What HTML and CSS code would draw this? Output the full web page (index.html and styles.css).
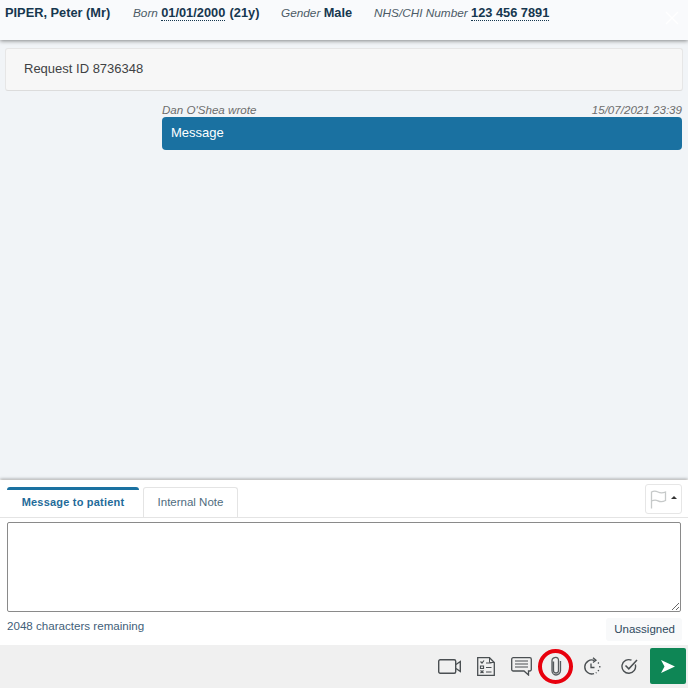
FILE: index.html
```html
<!DOCTYPE html>
<html lang="en">
<head>
<meta charset="utf-8">
<title>Request</title>
<link rel="stylesheet" href="styles.css">
</head>
<body>
<div class="app">
  <header class="patient">
    <span class="name">PIPER, Peter (Mr)</span>
    <span class="field born"><i>Born</i> <b class="dotted">01/01/2000</b> <b>(21y)</b></span>
    <span class="field gender"><i>Gender</i> <b>Male</b></span>
    <span class="field nhs"><i>NHS/CHI Number</i> <b class="dotted">123 456 7891</b></span>
    <svg class="close" width="14" height="14" viewBox="0 0 14 14"><path d="M1 1L13 13M13 1L1 13" stroke="#fff" stroke-width="1.4" fill="none"/></svg>
  </header>
  <main class="thread">
    <div class="request">Request ID 8736348</div>
    <div class="message">
      <div class="meta"><span>Dan O'Shea wrote</span><span>15/07/2021 23:39</span></div>
      <div class="bubble">Message</div>
    </div>
  </main>
  <section class="composer">
    <div class="tabbar">
      <div class="tabs">
        <div class="tab active">Message to patient</div>
        <div class="tab">Internal Note</div>
      </div>
      <div class="flagbtn">
        <svg width="17" height="19" viewBox="0 0 17 19"><path d="M1.5 18.5V2C4 .6 6 1 8 2s4.500 1.200 7.500 0V10.500C12.500 12 10 11.800 8 10.800S4 9.800 1.500 11" fill="none" stroke="#c6c9c9" stroke-width="1.300"/></svg>
        <span class="caret"></span>
      </div>
    </div>
    <div class="inputwrap"><textarea class="input"></textarea></div>
    <div class="statusrow">
      <span class="remaining">2048 characters remaining</span>
      <span class="assign">Unassigned</span>
    </div>
  </section>
  <footer class="toolbar">
    <svg class="tool cam" width="23" height="15" viewBox="0 0 23 15"><rect x=".7" y=".7" width="17" height="13.600" rx="1.500" fill="none" stroke="#4a4f52" stroke-width="1.400"/><path d="M18 5.500L22.300 2.500V12.500L18 9.500" fill="none" stroke="#4a4f52" stroke-width="1.400"/></svg>
    <svg class="tool doc" width="18" height="19" viewBox="0 0 18 19"><path d="M.7.7H12.500L17.300 5.500V18.300H.7Z" fill="none" stroke="#4a4f52" stroke-width="1.300"/><path d="M12.500 .7V5.500H17.300" fill="none" stroke="#4a4f52" stroke-width="1"/><path d="M3.500 4.500L5 6L7 3.500M9 6H14.500M3.500 9H6.500V11.500H3.500ZM9 10.500H14.500M3.500 13.500L6.500 16M6.500 13.500L3.500 16M9 15H14.500" fill="none" stroke="#4a4f52" stroke-width="1.200"/></svg>
    <svg class="tool chat" width="21" height="19" viewBox="0 0 21 19"><path d="M2.200 .7H18.800A1.500 1.500 0 0 1 20.300 2.200V12.500A1.500 1.500 0 0 1 18.800 14H17.500V18L13 14H2.200A1.500 1.500 0 0 1 .7 12.500V2.200A1.500 1.500 0 0 1 2.200 .7Z" fill="none" stroke="#4a4f52" stroke-width="1.300"/><path d="M4 4H17M4 7H17M4 10H17" stroke="#4a4f52" stroke-width="1.200"/></svg>
    <div class="attach">
      <svg width="12" height="20" viewBox="0 0 12 20"><path d="M3.500 5.500V14.500C3.500 16 4.500 17 6 17S8.500 16 8.500 14.500V4.500C8.500 2.500 7.300 1.300 5.800 1.300S2 2.500 2 4.500V14.500C2 17 3.700 19 6 19S10.500 17 10.500 14.500V5" fill="none" stroke="#555a5d" stroke-width="1.300"/></svg>
    </div>
    <svg class="tool clock" width="18" height="18" viewBox="0 0 18 18"><path d="M11.500 3.500A7 7 0 1 0 11 16.600" fill="none" stroke="#4a4f52" stroke-width="1.400"/><path d="M8 6.500V10.500H11.500" fill="none" stroke="#4a4f52" stroke-width="1.300"/><path d="M10 .7L13 3.300L10 5.500" fill="none" stroke="#4a4f52" stroke-width="1.300"/><path d="M15 5.500L15.800 6.500M16.800 9V10.500M15.800 13L15 14.200M13.500 15.500L12.800 16" stroke="#4a4f52" stroke-width="1.300"/></svg>
    <svg class="tool check" width="17" height="16" viewBox="0 0 17 16"><path d="M14.300 6.500A6.800 6.800 0 1 1 10.500 2.200" fill="none" stroke="#4a4f52" stroke-width="1.400"/><path d="M4.500 7.500L7.800 10.800L16 2" fill="none" stroke="#4a4f52" stroke-width="1.500"/></svg>
    <button class="send" type="button" aria-label="Send">
      <svg width="14" height="13" viewBox="0 0 14 13"><path d="M0 0L14 6.500L0 13L3.500 6.500Z" fill="#fff"/></svg>
    </button>
  </footer>
</div>
</body>
</html>
```
FILE: styles.css
```css
* { box-sizing: border-box; }
html, body { margin: 0; padding: 0; }
body { font-family: "Liberation Sans", Arial, sans-serif; background: #fff; color: #3c4043; }
.app { width: 688px; height: 688px; display: flex; flex-direction: column; overflow: hidden; }

.patient {
  height: 40px; flex: none; display: flex; align-items: flex-start; padding: 5px 9px 0 5px;
  background: #f9fafc; box-shadow: 0 1px 4px rgba(0,0,0,.45); position: relative; z-index: 2;
  font-size: 11.8px; line-height: 16px; color: #16374f;
}
.name { font-weight: 700; width: 128px; font-size: 12.8px; }
.field i { color: #4c5a66; }
.field b { font-weight: 700; font-size: 12.8px; }
.born { width: 148px; }
.gender { width: 93px; }
.nhs { flex: 1; }
.dotted { border-bottom: 1px dotted #16374f; display: inline-block; line-height: 15px; margin-right: 1px; }
.close { margin-top: 6px; }

.thread { height: 439px; flex: none; background: #f1f4f7; padding: 8px 5px 0; }
.request {
  height: 43px; background: #f7f7f7; border: 1px solid #e6e6e6; border-bottom-color: #dcdcdc; border-radius: 3px;
  font-size: 13px; line-height: 39px; padding-left: 18px; color: #3f4244;
}
.message { margin: 13px 1px 0 157px; }
.meta { display: flex; justify-content: space-between; font-size: 11.6px; line-height: 11px; font-style: italic; color: #6d6d6d; height: 13px; }
.bubble { height: 33px; background: #1a71a1; border-radius: 4px; color: #fff; font-size: 13px; line-height: 32px; padding-left: 9px; }

.composer { flex: 1; background: #fff; box-shadow: 0 -1px 3px rgba(0,0,0,.35); position: relative; z-index: 1; min-height: 0; margin-top: 1px; }
.tabbar { height: 38px; display: flex; justify-content: space-between; align-items: flex-end; padding: 0 6px 0 7px; border-bottom: 1px solid #e4e4e4; position: relative; }
.tabs { display: flex; gap: 4px; height: 30px; }
.tab { width: 95px; border: 1px solid #e4e4e4; border-bottom: 0; border-radius: 3px 3px 0 0; font-size: 11.5px; line-height: 28px; text-align: center; color: #4f6b7e; }
.tab.active { width: 132px; border: 0; border-top: 3px solid #1a71a1; font-weight: 700; color: #1f6b99; line-height: 25px; letter-spacing: .2px; font-size: 11px; }
.flagbtn {
  position: absolute; right: 6px; top: 4px; width: 37px; height: 30px; border: 1px solid #e6e6e6; border-radius: 3px;
  display: flex; align-items: center; gap: 4px; padding-left: 4px; background: #fff;
}
.caret { width: 0; height: 0; border-left: 3px solid transparent; border-right: 3px solid transparent; border-bottom: 3px solid #333; margin-bottom: 3px; }
.inputwrap { padding: 4px 7px 0; }
.input { display: block; width: 100%; height: 90px; border: 1px solid #8a8a8a; border-radius: 2px; background: #fff; margin: 0; outline: 0; }
.statusrow { display: flex; justify-content: space-between; align-items: flex-start; padding: 4px 6px 0 7px; height: 33px; }
.remaining { font-size: 11.6px; line-height: 19px; color: #3f6079; }
.assign { font-size: 11.500px; line-height: 23px; height: 23px; padding: 0 7px 0 8px; background: #f8f9fa; border-radius: 3px; color: #2f4a5e; margin-top: 2px; }

.toolbar { height: 43px; flex: none; background: #f0f0f0; display: flex; align-items: center; justify-content: flex-end; padding: 0 2px 1px 0; position: relative; z-index: 2; }
.tool { flex: none; }
.cam { margin-right: 16px; }
.doc { margin-right: 16px; }
.chat { margin-right: 6px; }
.attach { width: 35px; height: 35px; border: 4px solid #e8000d; border-radius: 50%; display: flex; align-items: center; justify-content: center; margin-right: 10px; flex: none; }
.clock { margin-right: 20px; }
.check { margin-right: 12px; }
.send { width: 36px; height: 36px; border: 0; padding: 0; background: #0e8655; border-radius: 2px; display: flex; align-items: center; justify-content: center; }
```
